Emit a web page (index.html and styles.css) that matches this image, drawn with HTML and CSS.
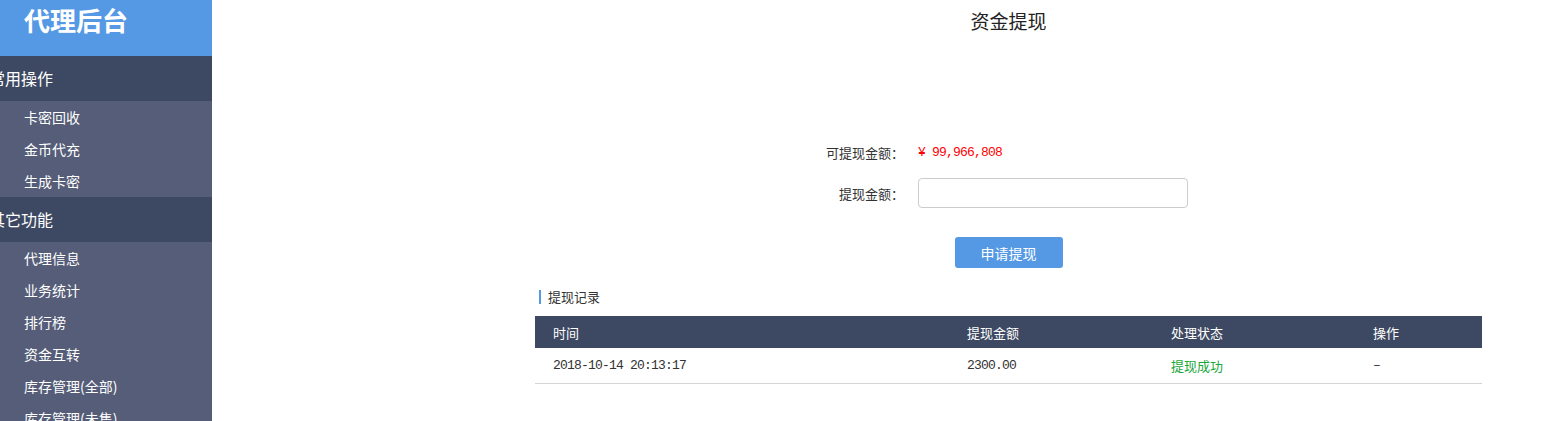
FILE: index.html
```html
<!DOCTYPE html>
<html lang="zh-CN">
<head>
<meta charset="utf-8">
<title>资金提现</title>
<link rel="stylesheet" href="styles.css">
</head>
<body>
<div class="layout">
  <aside class="sidebar">
    <div class="brand">代理后台</div>
    <div class="group-title">常用操作</div>
    <ul class="menu">
      <li>卡密回收</li>
      <li>金币代充</li>
      <li>生成卡密</li>
    </ul>
    <div class="group-title">其它功能</div>
    <ul class="menu">
      <li>代理信息</li>
      <li>业务统计</li>
      <li>排行榜</li>
      <li>资金互转</li>
      <li>库存管理(全部)</li>
      <li>库存管理(未售)</li>
    </ul>
  </aside>
  <main class="main">
    <div class="content">
      <h1 class="page-title">资金提现</h1>
      <div class="form">
        <div class="form-row first">
          <span class="label">可提现金额：</span>
          <span class="amount num">¥ 99,966,808</span>
        </div>
        <div class="form-row">
          <span class="label">提现金额：</span>
          <input class="input" type="text">
        </div>
        <div class="btn-row">
          <button class="btn">申请提现</button>
        </div>
      </div>
      <div class="section-title">提现记录</div>
      <table class="records">
        <colgroup>
          <col class="c1"><col class="c2"><col class="c3"><col class="c4">
        </colgroup>
        <thead>
          <tr><th>时间</th><th>提现金额</th><th>处理状态</th><th>操作</th></tr>
        </thead>
        <tbody>
          <tr><td class="num">2018-10-14 20:13:17</td><td class="num">2300.00</td><td class="ok">提现成功</td><td class="num">–</td></tr>
        </tbody>
      </table>
    </div>
  </main>
</div>
</body>
</html>
```
FILE: styles.css
```css
html, body {
  margin: 0;
  padding: 0;
  height: 100%;
  overflow: hidden;
  background: #fff;
  font-family: "Noto Sans CJK SC", "Noto Sans", sans-serif;
  color: #333;
}
.layout {
  display: flex;
  height: 421px;
}
.sidebar {
  width: 212px;
  flex: 0 0 212px;
  background: #555d78;
  height: 100%;
  overflow: hidden;
  color: #fff;
}
.brand {
  height: 56px;
  background: #5599e5;
  font-size: 26px;
  font-weight: bold;
  line-height: 40px;
  padding-left: 24px;
}
.group-title {
  height: 45px;
  line-height: 45px;
  background: #3d4962;
  font-size: 16px;
  text-indent: -11px;
  white-space: nowrap;
}
.menu {
  list-style: none;
  margin: 0;
  padding: 0;
}
.menu li {
  height: 32px;
  line-height: 32px;
  padding-left: 24px;
  font-size: 14px;
  white-space: nowrap;
}
.main {
  flex: 1;
}
.content {
  margin-left: 323px;
  width: 947px;
}
.page-title {
  margin: 0;
  font-size: 19px;
  font-weight: normal;
  text-align: center;
  line-height: 42px;
  color: #222;
}
.form {
  margin-top: 95px;
}
.form-row {
  display: grid;
  grid-template-columns: 369px 270px;
  column-gap: 14px;
  align-items: center;
  height: 30px;
  margin-top: 11px;
  font-size: 13px;
}
.form-row.first {
  margin-top: 0;
}
.label {
  text-align: right;
  color: #333;
}
.num {
  font-family: "Liberation Mono", "DejaVu Sans Mono", monospace;
  font-size: 13px;
  letter-spacing: -0.8px;
}
.amount {
  color: #f00;
  padding-top: 1px;
}
.input {
  box-sizing: border-box;
  width: 270px;
  height: 30px;
  border: 1px solid #ccc;
  border-radius: 4px;
  margin: 0;
  padding: 0 8px;
  outline: none;
}
.btn-row {
  display: flex;
  justify-content: center;
  margin-top: 29px;
}
.btn {
  width: 108px;
  height: 31px;
  border: none;
  border-radius: 3px;
  background: #5599e5;
  color: #fff;
  font-family: inherit;
  font-size: 14px;
  padding: 0;
}
.section-title {
  margin-top: 19px;
  height: 20px;
  line-height: 20px;
  font-size: 13px;
  padding-left: 13px;
  position: relative;
}
.section-title::before {
  content: "";
  position: absolute;
  left: 4px;
  top: 3px;
  width: 2px;
  height: 14px;
  background: #5599e5;
}
.records {
  margin-top: 9px;
  width: 947px;
  border-collapse: collapse;
  table-layout: fixed;
  font-size: 13px;
}
.c1 { width: 414px; }
.c2 { width: 204px; }
.c3 { width: 202px; }
.c4 { width: 127px; }
.records th {
  background: #3d4962;
  color: #fff;
  font-weight: normal;
  text-align: left;
  height: 32px;
  padding: 0 0 0 18px;
}
.records td {
  height: 35px;
  padding: 0 0 0 18px;
  border-bottom: 1px solid #d4d4d4;
  color: #333;
}
.records td.ok {
  color: #1aa83a;
}
```
